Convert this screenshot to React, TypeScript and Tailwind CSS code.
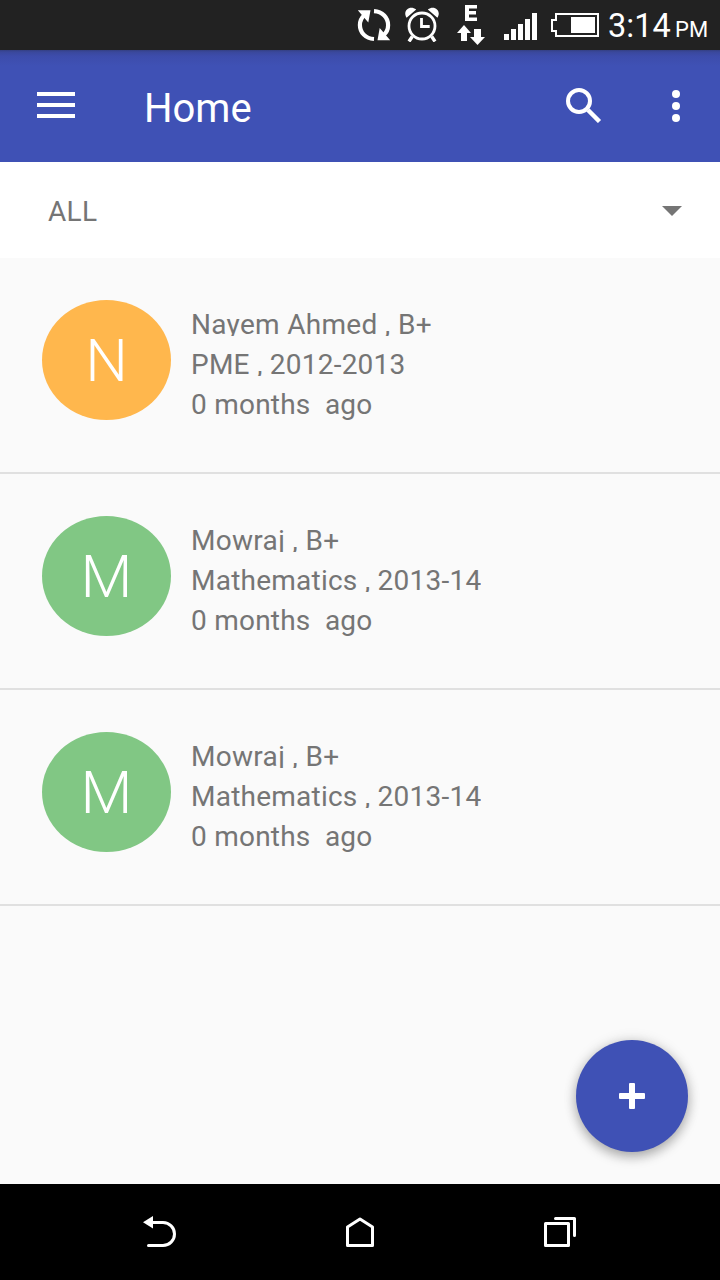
type Entry = { initial: string; tone: string; name: string; detail: string; age: string };

const entries: Entry[] = [
  { initial: 'N', tone: 'bg-[#ffb74d]', name: 'Nayem Ahmed , B+', detail: 'PME , 2012-2013', age: '0 months  ago' },
  { initial: 'M', tone: 'bg-[#81c784]', name: 'Mowraj , B+', detail: 'Mathematics , 2013-14', age: '0 months  ago' },
  { initial: 'M', tone: 'bg-[#81c784]', name: 'Mowraj , B+', detail: 'Mathematics , 2013-14', age: '0 months  ago' },
];

function SyncIcon() {
  return (
    <svg className="h-9 w-9 shrink-0" viewBox="0 0 36 36" fill="none" stroke="#fff" strokeWidth="4.2">
      <path d="M18 32C9.500 31.500 3.900 25.500 3.900 18c0-4 1.600-7.300 4.600-10" />
      <path d="M18 4.200C26.500 4.700 32.100 10.700 32.100 18.200c0 4-1.600 7.300-4.600 10" />
      <path d="M1.800 3.300H14.500L12.300 15.500zM34.200 33.200H21.500L23.700 21z" fill="#fff" stroke="none" />
    </svg>
  );
}

function AlarmIcon() {
  return (
    <svg className="h-9 w-9 shrink-0" viewBox="0 0 36 36" fill="none" stroke="#fff">
      <circle cx="18" cy="20" r="13" strokeWidth="2.800" />
      <path d="M17.500 12v8.500h8.200" strokeWidth="2.800" />
      <path d="M8.300 30.500l-3.300 5M27.700 30.500l3.300 5" strokeWidth="3.400" />
      <path d="M2.600 11.800C-2 4.500 6-1.500 12.200 3.500zM33.400 11.800C38 4.500 30-1.500 23.800 3.500z" fill="#fff" stroke="none" />
    </svg>
  );
}

function DataIcon() {
  return (
    <svg className="h-[42px] w-[28px] shrink-0" viewBox="0 0 28 42" fill="#fff">
      <path d="M8 2h12v3.500h-8V8h7v3.500h-7v3h8V18H8zM7 22l7 8h-4v8H4v-8H0zM17 26h7v8h4l-7.500 8-7.500-8h4z" />
    </svg>
  );
}

function StatusBar() {
  return (
    <header className="flex h-[50px] shrink-0 bg-[#222]">
      <div className="ml-[356px] pt-[7px]"><SyncIcon /></div>
      <div className="ml-3 pt-[6px]"><AlarmIcon /></div>
      <div className="ml-[17px] pt-[3px]"><DataIcon /></div>
      <svg className="ml-[19px] mt-[13px] h-[27px] w-[33px] shrink-0" viewBox="0 0 33 27" fill="#fff">
        <path d="M0 21h5v6H0zM7 16h5v11H7zM14 11h5v16h-5zM21 6h5v21h-5zM28 0h5v27h-5z" />
      </svg>
      <svg className="ml-[14px] mt-[13px] h-6 w-12 shrink-0" viewBox="0 0 48 24">
        <path d="M5 1h42v22H5v-5H1V7h4z" fill="none" stroke="#fff" strokeWidth="2" />
        <path d="M20 4h24v16H20z" fill="#fff" />
      </svg>
      <span className="ml-[9px] w-[67px] whitespace-nowrap pt-[6px] text-[32.500px] leading-[40px] text-white">3:14</span>
      <span className="whitespace-nowrap pt-[10px] text-[22px] leading-[40px] text-white">PM</span>
    </header>
  );
}

function AppBar() {
  return (
    <div className="flex h-28 shrink-0 bg-[linear-gradient(#343f83_0px,#3a489c_2px,#3d4cab_6px,#3f51b5_16px)]">
      <button aria-label="Menu" className="ml-[37px] mt-[42px] flex h-[26px] w-[38px] flex-col justify-between">
        <span className="h-1 w-full bg-white" />
        <span className="h-1 w-full bg-white" />
        <span className="h-1 w-full bg-white" />
      </button>
      <h1 className="ml-[69px] mt-[35px] flex-1 text-[40px] leading-[48px] text-white">Home</h1>
      <button aria-label="Search" className="mr-[70px] mt-[37px] h-9 w-9">
        <svg className="h-9 w-9" viewBox="0 0 36 36" fill="none" stroke="#fff">
          <circle cx="13" cy="14" r="11" strokeWidth="4" />
          <path d="M22 23L33.500 34.500" strokeWidth="4.500" />
        </svg>
      </button>
      <button aria-label="More" className="mr-10 mt-10 flex h-8 w-2 flex-col justify-between">
        <span className="size-2 rounded-full bg-white" />
        <span className="size-2 rounded-full bg-white" />
        <span className="size-2 rounded-full bg-white" />
      </button>
    </div>
  );
}

function Row({ entry }: { entry: Entry }) {
  return (
    <li className="flex h-[216px] border-b-2 border-[#e0e0e0] pl-[42px] pt-[42px]">
      <div className={`flex h-[120px] w-[129px] items-center justify-center rounded-[50%] pt-[2px] text-[60px] font-light leading-none text-white ${entry.tone}`}>
        {entry.initial}
      </div>
      <div className="ml-5 whitespace-pre text-[28px] leading-[40px] tracking-[0.23px] text-[#757575]">
        <p className="mb-1 h-9 overflow-hidden pt-[5px] tracking-[0.3px]">{entry.name}</p>
        <p className="mb-1 h-9 overflow-hidden pt-[5px]">{entry.detail}</p>
        <p className="pt-[5px]">{entry.age}</p>
      </div>
    </li>
  );
}

function SystemNav() {
  return (
    <nav className="flex h-24 shrink-0 bg-black">
      <svg className="ml-[142px] mt-8 h-8 w-9" viewBox="0 0 36 32" fill="none" stroke="#fff" strokeWidth="3" strokeLinecap="round">
        <path d="M9 6.500h12a11.500 11.500 0 0 1 0 23H6.500" />
        <path d="M1 6.300L11 0v12.500z" fill="#fff" stroke="none" />
      </svg>
      <svg className="ml-[168px] mt-8 h-8 w-[28px]" viewBox="0 0 28 32" fill="none" stroke="#fff" strokeWidth="3" strokeLinejoin="round">
        <path d="M1.500 29.500V11L14 3l12.500 8v18.500z" />
      </svg>
      <svg className="ml-[170px] mt-8 h-8 w-8" viewBox="0 0 32 32" fill="none" stroke="#fff" strokeWidth="3" strokeLinejoin="round" strokeLinecap="round">
        <path d="M1.500 7.500h23v22h-23zM11.500 2.500h19v17" />
      </svg>
    </nav>
  );
}

export default function App() {
  return (
    <div className="relative flex h-[1280px] w-[720px] flex-col overflow-hidden bg-[#fafafa] font-[Roboto,sans-serif]">
      <StatusBar />
      <AppBar />
      <button className="flex h-24 shrink-0 items-center justify-between bg-white pl-12 pr-[38px] text-[28px] tracking-[0.3px] text-[#757575]">
        <span className="pt-[3px]">ALL</span>
        <svg className="mt-[2px] h-[10px] w-5" viewBox="0 0 20 10" fill="#757575"><path d="M0 0h20L10 10z" /></svg>
      </button>
      <ul className="flex-1">
        {entries.map((entry, index) => <Row key={index} entry={entry} />)}
      </ul>
      <SystemNav />
      <button aria-label="Add" className="absolute bottom-32 right-8 flex size-28 items-center justify-center rounded-full bg-[#3f51b5] shadow-[0_5px_12px_rgba(0,0,0,0.28),0_0_14px_rgba(0,0,0,0.12)]">
        <svg className="h-[26px] w-[26px]" viewBox="0 0 26 26" fill="#fff">
          <rect x="10" width="6" height="26" rx="1" />
          <rect y="10" width="26" height="6" rx="1" />
        </svg>
      </button>
    </div>
  );
}
